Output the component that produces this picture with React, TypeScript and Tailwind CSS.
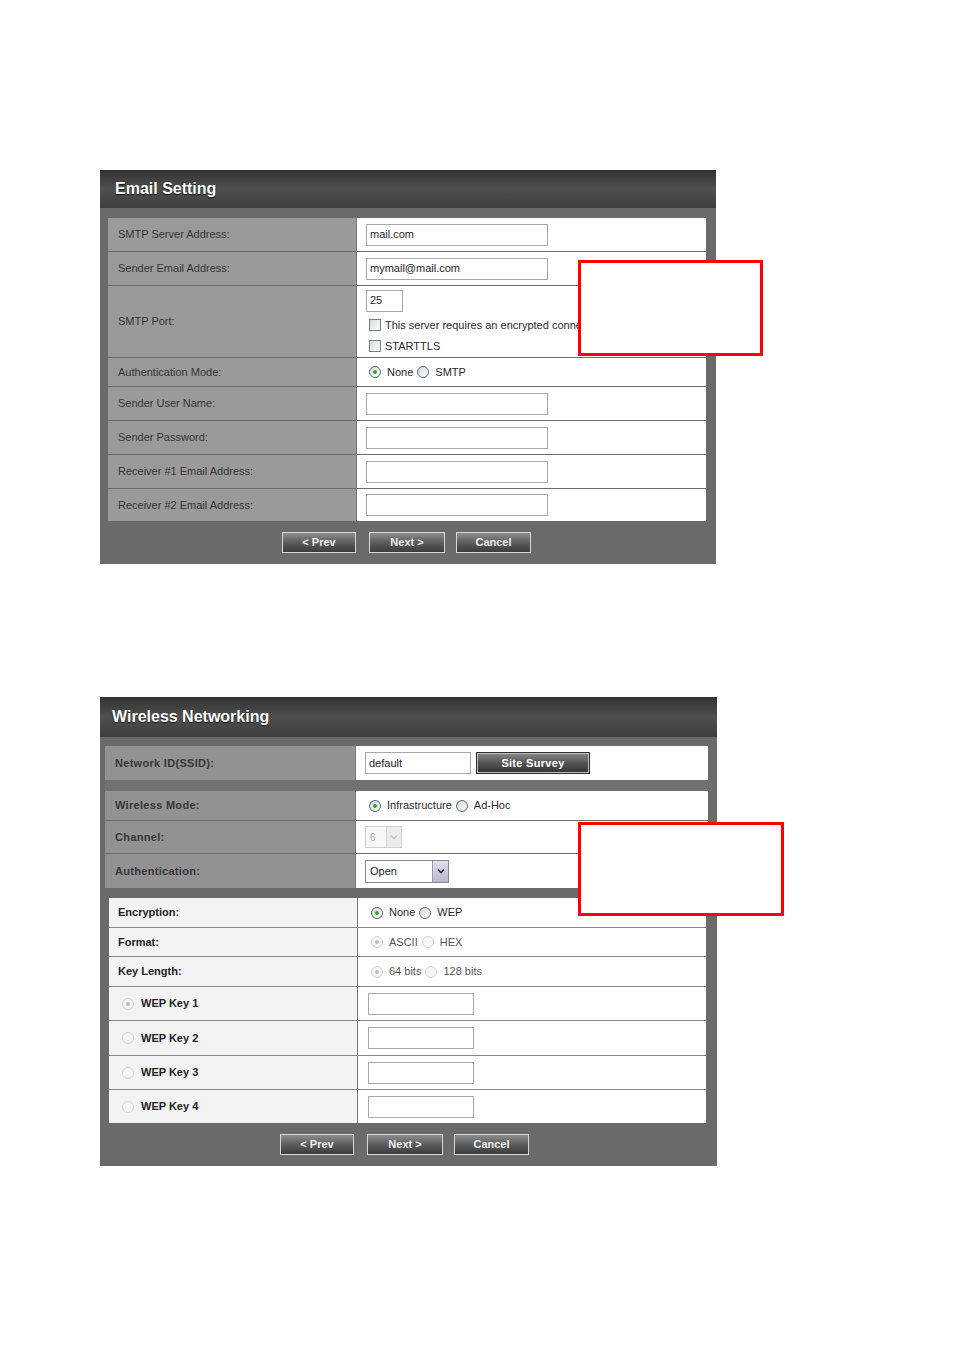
import React from 'react';

const sans = "font-['Liberation_Sans',Arial,sans-serif]";

function Radio({ on, dim }: { on?: boolean; dim?: boolean }) {
  return (
    <span
      className={`inline-flex shrink-0 w-[12px] h-[12px] rounded-full items-center justify-center border ${
        dim ? 'border-[#d2d2d2] bg-[#f6f6f6]' : 'border-[#4f6a88] bg-linear-to-br from-[#d8d8d8] to-white'
      }`}
    >
      {on && <span className={`w-[4px] h-[4px] rounded-full ${dim ? 'bg-[#bdbdbd]' : 'bg-[#27a827]'}`} />}
    </span>
  );
}

function Check() {
  return <span className="inline-block shrink-0 w-[12px] h-[12px] border border-[#6f8296] bg-linear-to-br from-[#dadada] to-white" />;
}

function Field({ value = '', w = 'w-[182px]' }: { value?: string; w?: string }) {
  return (
    <div className={`${w} h-[22px] border border-[#a8a8a8] bg-white flex items-center px-[3px] text-[11px] text-[#1e1e1e]`}>
      {value}
    </div>
  );
}

function NavButtons({ pad }: { pad: string }) {
  const btn =
    'h-[21px] flex items-center justify-center border border-[#d8d8d8] bg-linear-to-b from-[#8e8e8e] via-[#5c5c5c] to-[#3c3c3c] text-[11px] font-bold text-[#eeeeee]';
  return (
    <div className={`flex ${pad} pt-[11px] pb-[11px]`}>
      <div className={`${btn} w-[74px]`}>&lt; Prev</div>
      <div className={`${btn} w-[76px] ml-[13px]`}>Next &gt;</div>
      <div className={`${btn} w-[75px] ml-[11px]`}>Cancel</div>
    </div>
  );
}

function Header({ title, h }: { title: string; h: string }) {
  return (
    <div
      className={`${h} flex items-center bg-linear-to-b from-[#333333] via-[#4f4f4f] to-[#3e3e3e] text-white text-[16px] font-bold [text-shadow:0_1px_1px_#111]`}
    >
      {title}
    </div>
  );
}

type Row = { label: React.ReactNode; h: string; content: React.ReactNode; last?: boolean };

function EmailRow({ label, h, content, last }: Row) {
  return (
    <div className={`flex ${h} ${last ? '' : 'border-b border-[#6c6c6c]'}`}>
      <div className="w-[248px] bg-[#9a9a9a] flex items-center pl-[10px] text-[11px] text-[#353535]">{label}</div>
      <div className="flex-1 bg-white border-l border-[#7a7a7a] flex items-center pl-[9px]">{content}</div>
    </div>
  );
}

function WifiRow({ label, h, content, last }: Row) {
  return (
    <div className={`flex ${h} ${last ? '' : 'border-b border-[#6c6c6c]'}`}>
      <div className="w-[250px] bg-[#929292] flex items-center pl-[10px] text-[11px] font-bold tracking-[0.3px] text-[#383838]">
        {label}
      </div>
      <div className="flex-1 bg-white border-l border-[#7a7a7a] flex items-center pl-[9px]">{content}</div>
    </div>
  );
}

function KeyRow({ label, h, content, last }: Row) {
  return (
    <div className={`flex ${h} ${last ? '' : 'border-b border-[#8a8a8a]'}`}>
      <div className="w-[248px] bg-[#f3f3f3] flex items-center pl-[9px] text-[11px] font-bold text-[#222]">{label}</div>
      <div className="flex-1 bg-white border-l border-[#777] flex items-center pl-[10px]">{content}</div>
    </div>
  );
}

function Opt({ on, dim, text }: { on?: boolean; dim?: boolean; text: string }) {
  return (
    <span className="inline-flex items-center gap-[6px]">
      <Radio on={on} dim={dim} />
      <span className={`text-[11px] ${dim ? 'text-[#555]' : 'text-[#2a2a2a]'}`}>{text}</span>
    </span>
  );
}

const keyHeights = ['h-[34px]', 'h-[35px]', 'h-[34px]', 'h-[33px]'];

export default function App() {
  return (
    <div className={`relative w-[954px] h-[1350px] bg-white overflow-hidden ${sans}`}>
      {/* Email setting */}
      <div className="ml-[100px] mt-[170px] w-[616px] bg-[#6a6a6a]">
        <Header title="Email Setting" h="h-[38px] pl-[15px]" />
        <div className="ml-[8px] mr-[10px] mt-[10px]">
          <EmailRow label="SMTP Server Address:" h="h-[34px]" content={<Field value="mail.com" />} />
          <EmailRow label="Sender Email Address:" h="h-[34px]" content={<Field value="mymail@mail.com" />} />
          <EmailRow
            label="SMTP Port:"
            h="h-[72px]"
            content={
              <div className="flex flex-col gap-[5px] pt-[1px] text-[11px] text-[#2a2a2a]">
                <Field value="25" w="w-[37px]" />
                <span className="flex items-center gap-[4px] pl-[3px]">
                  <Check />
                  This server requires an encrypted connection (SSL)
                </span>
                <span className="flex items-center gap-[4px] pl-[3px]">
                  <Check />
                  STARTTLS
                </span>
              </div>
            }
          />
          <EmailRow
            label="Authentication Mode:"
            h="h-[29px]"
            content={
              <span className="flex items-center gap-[4px] pl-[3px]">
                <Opt on text="None" />
                <Opt text="SMTP" />
              </span>
            }
          />
          <EmailRow label="Sender User Name:" h="h-[34px]" content={<Field />} />
          <EmailRow label="Sender Password:" h="h-[34px]" content={<Field />} />
          <EmailRow label="Receiver #1 Email Address:" h="h-[34px]" content={<Field />} />
          <EmailRow label="Receiver #2 Email Address:" h="h-[32px]" content={<Field />} last />
        </div>
        <NavButtons pad="pl-[182px]" />
      </div>

      {/* Wireless networking */}
      <div className="ml-[100px] mt-[133px] w-[617px] bg-[#6a6a6a]">
        <Header title="Wireless Networking" h="h-[40px] pl-[12px]" />
        <div className="ml-[5px] mr-[9px] mt-[9px]">
          <WifiRow
            label="Network ID(SSID):"
            h="h-[34px]"
            last
            content={
              <div className="flex items-center gap-[5px]">
                <Field value="default" w="w-[106px]" />
                <div className="w-[114px] h-[22px] flex items-center justify-center border border-[#2e2e2e] shadow-[inset_0_0_0_1px_#bdbdbd] bg-linear-to-b from-[#8a8a8a] via-[#555] to-[#333] text-[11px] font-bold text-white tracking-[0.3px]">
                  Site Survey
                </div>
              </div>
            }
          />
        </div>
        <div className="h-[11px] mx-[5px] bg-[#717171]" />
        <div className="ml-[5px] mr-[9px]">
          <WifiRow
            label="Wireless Mode:"
            h="h-[30px]"
            content={
              <span className="flex items-center gap-[4px] pl-[4px]">
                <Opt on text="Infrastructure" />
                <Opt text="Ad-Hoc" />
              </span>
            }
          />
          <WifiRow
            label="Channel:"
            h="h-[33px]"
            content={
              <div className="flex w-[37px] h-[22px] border border-[#d0d0d0] bg-[#f7f7f7]">
                <span className="flex-1 flex items-center pl-[4px] text-[10px] text-[#aaa]">6</span>
                <span className="w-[15px] bg-[#ececec] border-l border-[#d8d8d8] flex items-center justify-center">
                  <svg width="8" height="6" viewBox="0 0 8 6">
                    <path d="M1 1.5 L4 4.5 L7 1.5" fill="none" stroke="#c4c4c4" strokeWidth="1.6" />
                  </svg>
                </span>
              </div>
            }
          />
          <WifiRow
            label="Authentication:"
            h="h-[34px]"
            last
            content={
              <div className="flex w-[84px] h-[23px] border border-[#8a8a8a] bg-white">
                <span className="flex-1 flex items-center pl-[4px] text-[11px] text-[#1e1e1e]">Open</span>
                <span className="w-[16px] bg-linear-to-b from-[#e0e0ee] to-[#b8b8d0] border-l border-[#9a9aae] flex items-center justify-center">
                  <svg width="8" height="6" viewBox="0 0 8 6">
                    <path d="M1 1.5 L4 4.5 L7 1.5" fill="none" stroke="#333" strokeWidth="1.6" />
                  </svg>
                </span>
              </div>
            }
          />
        </div>
        <div className="ml-[9px] mr-[11px] mt-[10px]">
          <KeyRow
            label="Encryption:"
            h="h-[30px]"
            content={
              <span className="flex items-center gap-[4px] pl-[3px]">
                <Opt on text="None" />
                <Opt text="WEP" />
              </span>
            }
          />
          <KeyRow
            label="Format:"
            h="h-[29px]"
            content={
              <span className="flex items-center gap-[4px] pl-[3px]">
                <Opt on dim text="ASCII" />
                <Opt dim text="HEX" />
              </span>
            }
          />
          <KeyRow
            label="Key Length:"
            h="h-[30px]"
            content={
              <span className="flex items-center gap-[4px] pl-[3px]">
                <Opt on dim text="64 bits" />
                <Opt dim text="128 bits" />
              </span>
            }
          />
          {[1, 2, 3, 4].map((n) => (
            <KeyRow
              key={n}
              label={
                <span className="flex items-center gap-[7px] pl-[4px]">
                  <Radio on={n === 1} dim />
                  <span>WEP Key {n}</span>
                </span>
              }
              h={keyHeights[n - 1]}
              last={n === 4}
              content={<Field w="w-[106px]" />}
            />
          ))}
        </div>
        <NavButtons pad="pl-[180px]" />
      </div>

      {/* red annotation boxes laid over the screenshots */}
      <div className="absolute left-[578px] top-[260px] w-[185px] h-[96px] border-[3px] border-[#ff0000] bg-white" />
      <div className="absolute left-[578px] top-[822px] w-[206px] h-[94px] border-[3px] border-[#ff0000] bg-white" />
    </div>
  );
}
